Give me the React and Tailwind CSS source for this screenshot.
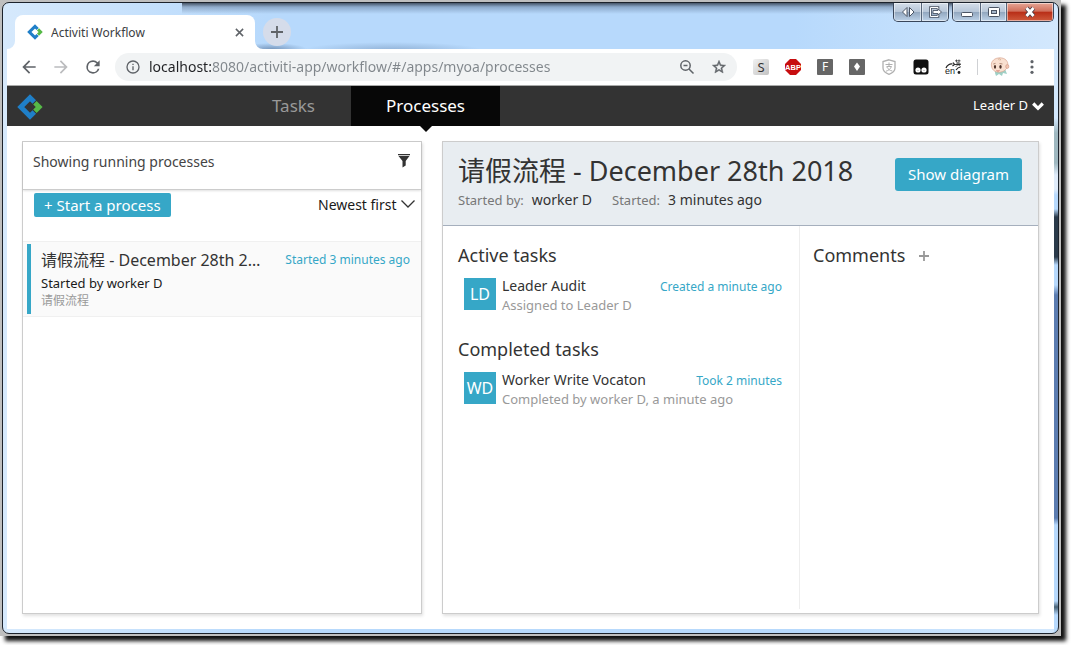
const FONT = "font-['Noto_Sans','Noto_Sans_CJK_SC',sans-serif]";

function Logo({ className }) {
  return (
    <svg viewBox="0 0 26 26" className={className} fill="none" aria-hidden="true">
      <path d="M17.300 8.100 13 3.800 3.800 13 13 22.200l4.300-4.300" stroke="#1f7fc8" strokeWidth="5" />
      <path d="M17.900 8.700 22.200 13l-4.300 4.300" stroke="#56b947" strokeWidth="4.800" />
    </svg>
  );
}

function Icon({ children, className, viewBox = '0 0 24 24' }) {
  return (
    <svg viewBox={viewBox} className={className} fill="currentColor" aria-hidden="true">
      {children}
    </svg>
  );
}

function WindowControls() {
  const cell = 'flex h-[18px] items-center justify-center border-r border-[#56657a] shadow-[inset_0_0_0_1px_rgba(255,255,255,0.5)] last:border-r-0';
  const group = 'flex overflow-hidden rounded-b-[5px] border border-t-0 border-[#39465a] bg-[linear-gradient(#d5dee9_0%,#b7c6d8_48%,#93a8c0_52%,#bdd2e8_100%)]';
  return (
    <div className="flex items-start gap-[3px]">
      <div className={group}>
        <button aria-label="Switch screen" className={cell + ' w-[28px]'}>
          <svg viewBox="0 0 14 12" className="h-3 w-3.5" fill="#fff" stroke="#4b5464" aria-hidden="true">
            <path d="M6 1.500v9L1.500 6zM8.500 1.500v9L13 6z" />
          </svg>
        </button>
        <button aria-label="Move window" className={cell + ' w-[26px]'}>
          <svg viewBox="0 0 14 12" className="h-3 w-3.5" fill="none" aria-hidden="true">
            <path d="M10 3.500V1.500H2.500v9H10V8.500" stroke="#4b5464" strokeWidth="2.600" />
            <path d="M10 3.500V1.500H2.500v9H10V8.500" stroke="#fff" strokeWidth="1" />
            <path d="M5 4.500h5V3l3.500 3L10 9V7.500H5z" fill="#fff" stroke="#4b5464" strokeWidth=".9" />
          </svg>
        </button>
      </div>
      <div className={group}>
        <button aria-label="Minimize" className={cell + ' w-[28px]'}>
          <svg viewBox="0 0 14 12" className="h-3 w-3.5" aria-hidden="true">
            <rect x="1.500" y="6.500" width="11" height="4" rx="1" fill="#fff" stroke="#4b5464" />
          </svg>
        </button>
        <button aria-label="Maximize" className={cell + ' w-[26px]'}>
          <svg viewBox="0 0 14 12" className="h-3 w-3.5" aria-hidden="true">
            <rect x="1.500" y="1.500" width="11" height="9" rx="1" fill="#fff" stroke="#4b5464" />
            <rect x="4.500" y="4.500" width="5" height="3" fill="#a5b6ca" stroke="#4b5464" />
          </svg>
        </button>
        <button aria-label="Close window" className={cell + ' w-[46px] bg-[linear-gradient(#e6a595_0%,#d0705c_45%,#b92f18_52%,#cf5a3c_100%)]'}>
          <svg viewBox="0 0 14 12" className="h-3 w-3.5" aria-hidden="true">
            <path d="M3.500 2l7 8M10.500 2l-7 8" stroke="#4b3b45" strokeWidth="4.500" />
            <path d="M3.500 2l7 8M10.500 2l-7 8" stroke="#fff" strokeWidth="2.800" />
          </svg>
        </button>
      </div>
    </div>
  );
}

function TitleBar() {
  return (
    <header className="flex h-[46px] justify-between bg-[radial-gradient(ellipse_90px_8px_at_385px_47px,rgba(60,90,130,0.3),transparent),radial-gradient(ellipse_35px_6px_at_265px_46px,rgba(60,90,130,0.5),transparent),linear-gradient(rgba(40,50,65,0.8),rgba(60,80,110,0.35)_4px,transparent_11px)] bg-[size:100%_100%,100%_100%,calc(100%_-_175px)_11px] bg-[position:left_top,left_top,right_top] bg-no-repeat">
      <div className="flex items-end">
        <Icon viewBox="0 0 8 8" className="h-2 w-2 text-white"><path d="M8 0v8H0a8 8 0 0 0 8-8" /></Icon>
        <div className="flex h-[34px] w-[240px] items-center rounded-t-lg bg-white pr-2 pl-3">
          <Logo className="h-4 w-4 shrink-0" />
          <span className="ml-2 flex-1 truncate pt-0.5 text-[12px] text-[#3c4043]">Activiti Workflow</span>
          <button aria-label="Close tab" className="flex h-4 w-4 items-center justify-center text-[#5f6368]">
            <svg viewBox="0 0 10 10" className="h-[9px] w-[9px]" aria-hidden="true">
              <path d="M1 1l8 8M9 1l-8 8" stroke="currentColor" strokeWidth="1.700" />
            </svg>
          </button>
        </div>
        <Icon viewBox="0 0 8 8" className="h-2 w-2 text-white"><path d="M0 0v8h8a8 8 0 0 1-8-8" /></Icon>
        <button aria-label="New tab" className="mb-[3px] flex h-7 w-7 items-center justify-center rounded-full bg-[#d5dcea] text-[#5f6368]">
          <svg viewBox="0 0 12 12" className="h-3 w-3" aria-hidden="true">
            <path d="M6 0v12M0 6h12" stroke="currentColor" strokeWidth="1.800" />
          </svg>
        </button>
      </div>
      <WindowControls />
    </header>
  );
}

function Extensions() {
  const b = 'flex h-4 w-4 items-center justify-center';
  return (
    <div className="ml-4 flex items-center gap-4">
      <button aria-label="S extension" className={b + ' rounded-[2px] bg-[linear-gradient(135deg,#f2f2f2,#c2c2c2)] text-[13px] leading-4 text-[#333]'}>S</button>
      <button aria-label="Ad blocker" className={b}>
        <svg viewBox="0 0 16 16" className="h-4 w-4" aria-hidden="true">
          <path d="M5 0h6l5 5v6l-5 5H5l-5-5V5z" fill="#c70d0f" />
          <text x="8" y="10.800" textAnchor="middle" fontSize="7.500" fontWeight="700" fill="#fff" fontFamily="Liberation Sans">ABP</text>
        </svg>
      </button>
      <button aria-label="F extension" className={b + ' rounded-[1px] bg-[#666] text-[12px] leading-4 text-white'}>F</button>
      <button aria-label="Diamond extension" className={b + ' rounded-[1px] bg-[#666]'}>
        <svg viewBox="0 0 16 16" className="h-4 w-4" aria-hidden="true">
          <path d="M8 3.500 11 7.500 8 12 5 7.500z" fill="#fff" />
        </svg>
      </button>
      <button aria-label="Payment security" className={b}>
        <svg viewBox="0 0 16 16" className="h-4 w-4" fill="none" stroke="#b0b0b0" aria-hidden="true">
          <path d="M8 .8 14 2.500v6.500c0 3-3 5.200-6 6.300C5 14.200 2 12 2 9V2.500z" strokeWidth="1.300" />
          <path d="M4.500 5.500h7M8 3.500v4M5.500 7.500h5c-1 2.500-3 4-5.500 4.700M5.800 8c1.200 2.200 3 3.500 5.500 4" />
        </svg>
      </button>
      <button aria-label="Script manager" className={b}>
        <svg viewBox="0 0 16 16" className="h-4 w-4" aria-hidden="true">
          <rect x=".5" y=".5" width="15" height="15" rx="2.500" fill="#111" />
          <circle cx="5" cy="11" r="2.600" fill="#fff" />
          <circle cx="11" cy="11" r="2.600" fill="#fff" />
          <circle cx="5" cy="11.500" r=".6" fill="#999" />
          <circle cx="11" cy="11.500" r=".6" fill="#999" />
        </svg>
      </button>
      <button aria-label="Translate" className={b}>
        <svg viewBox="0 0 16 16" className="h-4 w-4 overflow-visible" fill="none" stroke="#222" aria-hidden="true">
          <path d="M1 9c1-3 4-4.500 6.500-4M8 3.500l1.500 2-2 1.500M15.500 8c-2 .2-3.500 1.500-4.500 3" strokeWidth="1.200" />
          <path d="M10 1.800h5.500M11.500.5v2.500M14 .5v2.500M11 4h4v1.500h-5h6M13 3.200v2.300c-.5 1.200-1.500 1.700-2.500 2M13 5.500l2.500 2" strokeWidth=".7" />
          <circle cx="14" cy="13.500" r="1.400" fill="#222" stroke="none" />
          <text x="0" y="15" fontSize="9" fill="#222" stroke="none" fontFamily="Liberation Sans">en</text>
        </svg>
      </button>
    </div>
  );
}

function Toolbar() {
  return (
    <div className="flex h-[37px] items-center border-b border-[#a9aaa9] bg-white pr-3.5 pl-3 text-[#5f6368]">
      <div className="flex items-center gap-3">
        <button aria-label="Back"><Icon className="h-5 w-5"><path d="M20 11H7.830l5.590-5.590L12 4l-8 8 8 8 1.410-1.410L7.830 13H20z" /></Icon></button>
        <button aria-label="Forward" className="text-[#bbbcbe]"><Icon className="h-5 w-5"><path d="M12 4l-1.410 1.410L16.170 11H4v2h12.170l-5.580 5.590L12 20l8-8z" /></Icon></button>
        <button aria-label="Reload"><Icon className="h-5 w-5"><path d="M17.650 6.350A7.960 7.960 0 0 0 12 4a8 8 0 1 0 7.730 10h-2.080A6 6 0 1 1 12 6c1.660 0 3.140.69 4.220 1.780L13 11h7V4z" /></Icon></button>
      </div>
      <div className="ml-3 flex h-7 flex-1 items-center rounded-full bg-[#f1f3f4] pr-2.5 pl-2.5">
        <Icon className="h-4 w-4 shrink-0"><path d="M11 17h2v-6h-2zm1-15a10 10 0 1 0 0 20 10 10 0 0 0 0-20m0 18a8 8 0 1 1 0-16 8 8 0 0 1 0 16M11 9h2V7h-2z" /></Icon>
        <input
          aria-label="Address"
          defaultValue="localhost:8080/activiti-app/workflow/#/apps/myoa/processes"
          className="ml-2 min-w-0 flex-1 bg-[linear-gradient(90deg,#202124_63px,#80868b_63px)] bg-clip-text pb-px text-[14px] leading-5 text-transparent outline-none"
        />
        <button aria-label="Zoom">
          <svg viewBox="0 0 16 16" className="h-4 w-4" fill="none" stroke="currentColor" strokeWidth="1.500" aria-hidden="true">
            <circle cx="6.500" cy="6.500" r="4.700" />
            <path d="M10 10l4.500 4.500M4.500 6.500h4" />
          </svg>
        </button>
        <button aria-label="Bookmark" className="ml-4">
          <Icon className="h-4 w-4"><path d="M22 9.240l-7.190-.62L12 2 9.190 8.630 2 9.240l5.460 4.730L5.820 21 12 17.270 18.180 21l-1.630-7.030zM12 15.400l-3.760 2.270 1-4.280-3.320-2.880 4.380-.38L12 6.100l1.710 4.040 4.380.38-3.320 2.880 1 4.280z" stroke="currentColor" strokeWidth=".7" /></Icon>
        </button>
      </div>
      <Extensions />
      <span className="ml-4 h-4 w-px bg-[#cfd1d4]" />
      <button aria-label="Profile" className="ml-3">
        <svg viewBox="0 0 20 20" className="h-5 w-5" aria-hidden="true">
          <path d="M5 13l10-1 2 5-4-1-1 3-3-2-3 2-1-3z" fill="#9fd0c6" />
          <path d="M1.500 9C.5 4 5 .8 10 .8s8.700 3.500 7.700 8c-.7 3.500-4 6.400-8.700 6.400S2 12.500 1.500 9" fill="#f9e0d0" stroke="#d39a84" strokeWidth=".6" />
          <ellipse cx="17.300" cy="9.500" rx="1.600" ry="2" fill="#f3c6b2" stroke="#c98f78" strokeWidth=".5" />
          <path d="M8 2.500c1.500-1.500 3.500 0 2 1" fill="none" stroke="#c99c7c" strokeWidth=".7" />
          <ellipse cx="5" cy="9.800" rx="1.100" ry="1.900" fill="#4b3128" />
          <ellipse cx="10.500" cy="9.800" rx="1.200" ry="1.900" fill="#4b3128" />
          <path d="M3.300 7l2.200-.6M9.500 6.500l3 .5" stroke="#9a6c55" strokeWidth=".7" />
          <path d="M6.500 13.400c1 .8 2 .8 3 0" stroke="#c4564b" strokeWidth=".8" fill="none" />
        </svg>
      </button>
      <button aria-label="Menu" className="ml-3.5">
        <Icon className="h-4 w-4"><circle cx="12" cy="4" r="2.400" /><circle cx="12" cy="12" r="2.400" /><circle cx="12" cy="20" r="2.400" /></Icon>
      </button>
    </div>
  );
}

function AppNav() {
  return (
    <nav className="flex h-10 items-center bg-[#333] px-2.5 text-white">
      <a href="#/" aria-label="Home"><Logo className="mt-0.5 h-[26px] w-[26px]" /></a>
      <div className="ml-[194px] flex h-10">
        <a href="#/tasks" className="flex items-center pr-9 pl-[35px] text-[17px] text-[#999]">Tasks</a>
        <a href="#/processes" className="relative flex items-center bg-[#070707] px-[35px] text-[17px]">
          Processes
          <svg viewBox="0 0 12 6" className="absolute top-full left-1/2 h-1.5 w-3 -translate-x-1/2" aria-hidden="true"><path d="M0 0h12L6 6z" fill="#070707" /></svg>
        </a>
      </div>
      <button className="ml-auto flex items-center gap-1 text-[13px]">
        Leader D
        <svg viewBox="0 0 12 9" className="h-[9px] w-3" aria-hidden="true"><path d="M1.200 1.500 6 6.300 10.800 1.500" fill="none" stroke="#fff" strokeWidth="3.200" /></svg>
      </button>
    </nav>
  );
}

function ProcessList() {
  return (
    <section className="flex min-w-0 flex-col border border-[#ccc] shadow-[1px_2px_3px_rgba(0,0,0,0.12)]">
      <div className="flex h-12 items-start justify-between border-b border-[#ccc] pt-2.5 pr-2.5 pl-2.5 shadow-[0_1px_2px_rgba(0,0,0,0.12)]">
        <h2 className="text-[14px] leading-5 text-[#444]">Showing running processes</h2>
        <button aria-label="Filter" className="pt-0.5">
          <svg viewBox="0 0 14 14" className="h-3.5 w-3.5" fill="#333" aria-hidden="true"><path d="M1 0h12v1.300H1zM1.500 2h11L8.700 7v4.500L5.500 13.500V7z" /></svg>
        </button>
      </div>
      <div className="flex h-[51px] items-start justify-between pt-[3px] pr-1.5 pl-[11px]">
        <button className="h-6 rounded-[2px] bg-[#36a7c7] px-2.5 text-[15px] leading-6 text-white">+ Start a process</button>
        <label className="flex h-6 items-center pb-0.5">
          <select aria-label="Sort order" className="appearance-none bg-transparent text-[14px] text-[#1a1a1a] outline-none">
            <option>Newest first</option>
          </select>
          <svg viewBox="0 0 14 8" className="ml-1 h-2 w-3.5" fill="none" stroke="#333" strokeWidth="1.300" aria-hidden="true"><path d="M.5.500 7 7 13.500.500" /></svg>
        </label>
      </div>
      <ul>
        <li className="flex border-y border-[#f0f0f0] bg-[#fafafa] py-0.5 pl-1">
          <a href="#/process" className="flex h-[70px] min-w-0 flex-1 flex-col border-l-4 border-[#36a7c7] pt-1 pr-[11px] pl-2.5">
            <span className="flex items-center gap-[18px]">
              <span className="min-w-0 flex-1 truncate text-[16px] leading-6 text-[#333]">请假流程 - December 28th 2018</span>
              <span className="text-[12px] text-[#36a7c7]">Started 3 minutes ago</span>
            </span>
            <span className="text-[13px] leading-[22px] text-[#1a1a1a]">Started by worker D</span>
            <span className="text-[12px] leading-3.5 text-[#999]">请假流程</span>
          </a>
        </li>
      </ul>
    </section>
  );
}

function Task({ initials, name, note, time }) {
  return (
    <li className="flex pl-1.5">
      <span className="mt-0.5 flex h-8 w-8 shrink-0 items-center justify-center bg-[#36a7c7] text-[16px] text-white">{initials}</span>
      <div className="ml-1.5 min-w-0 flex-1">
        <div className="flex items-center justify-between">
          <span className="text-[14px] leading-5 text-[#333]">{name}</span>
          <span className="pt-0.5 text-[12px] leading-[18px] text-[#36a7c7]">{time}</span>
        </div>
        <p className="text-[13px] leading-[18px] text-[#999]">{note}</p>
      </div>
    </li>
  );
}

function ProcessDetail() {
  return (
    <section className="flex min-w-0 flex-col border border-[#ccc] shadow-[1px_2px_3px_rgba(0,0,0,0.12)]">
      <div className="flex h-[84px] items-start justify-between border-b border-[#a5afbd] bg-[#e8edf1] pt-4 pr-4 pl-[15px]">
        <div>
          <h1 className="text-[27px] leading-[26px] text-[#333]">请假流程 - December 28th 2018</h1>
          <dl className="mt-1.5 flex items-baseline leading-5">
            <dt className="text-[13px] text-[#777]">Started by:</dt>
            <dd className="ml-2 text-[14px] text-[#333]">worker D</dd>
            <dt className="ml-5 text-[13px] text-[#777]">Started:</dt>
            <dd className="ml-2 text-[14px] text-[#333]">3 minutes ago</dd>
          </dl>
        </div>
        <button className="h-[33px] rounded-[3px] bg-[#36a7c7] px-[13px] text-[15px] text-white">Show diagram</button>
      </div>
      <div className="grid flex-1 grid-cols-[357fr_238fr] pb-1">
        <div className="border-r border-[#eee] pt-4 pr-[17px] pl-[15px]">
          <h3 className="text-[18px] leading-[26px] text-[#333]">Active tasks</h3>
          <ul className="mt-2">
            <Task initials="LD" name="Leader Audit" note="Assigned to Leader D" time="Created a minute ago" />
          </ul>
          <h3 className="mt-[22px] text-[18px] leading-[26px] text-[#333]">Completed tasks</h3>
          <ul className="mt-2">
            <Task initials="WD" name="Worker Write Vocaton" note="Completed by worker D, a minute ago" time="Took 2 minutes" />
          </ul>
        </div>
        <div className="flex items-start gap-3.5 pt-4 pl-[13px]">
          <h3 className="text-[18px] leading-[26px] text-[#333]">Comments</h3>
          <button aria-label="Add comment" className="flex h-7 items-center">
            <svg viewBox="0 0 10 10" className="h-2.5 w-2.5" aria-hidden="true"><path d="M5 0v10M0 5h10" stroke="#999" strokeWidth="1.800" /></svg>
          </button>
        </div>
      </div>
    </section>
  );
}

export default function App() {
  return (
    <div className={FONT + ' flex min-h-screen flex-col overflow-hidden bg-white pr-2.5 pb-[9px] antialiased'}>
      <div className="flex flex-1 flex-col bg-[#bfbfbf] p-0.5 shadow-[5px_5px_4px_#111]">
        <div className="flex flex-1 flex-col rounded-[7px] border border-[#1c222b] bg-[linear-gradient(transparent_115px,#9fb8c0_130px,#9fb8c0_160px,#e0ecfa_172px,#e0ecfa_186px,#b7d9fc_192px,#b7d9fc_206px,#2a3a4a_214px,#2a3a4a_254px,#b7d9fc_262px,#b7d9fc_282px,#5b7cb0_292px,#5b7cb0_515px,#b7d9fc_522px,#b7d9fc_598px,#4a6478_604px,#b7d9fc_612px),linear-gradient(90deg,#d6e9fc,#b7d9fc_25%,#b7d9fc_75%,#d3e8fd)] bg-[size:4px_100%,100%_100%] bg-[position:right_top,left_top] bg-no-repeat px-1 pb-1">
          <TitleBar />
          <Toolbar />
          <AppNav />
          <main className="grid flex-1 grid-cols-[400fr_597fr] gap-5 bg-white p-[15px]">
            <ProcessList />
            <ProcessDetail />
          </main>
        </div>
      </div>
    </div>
  );
}
